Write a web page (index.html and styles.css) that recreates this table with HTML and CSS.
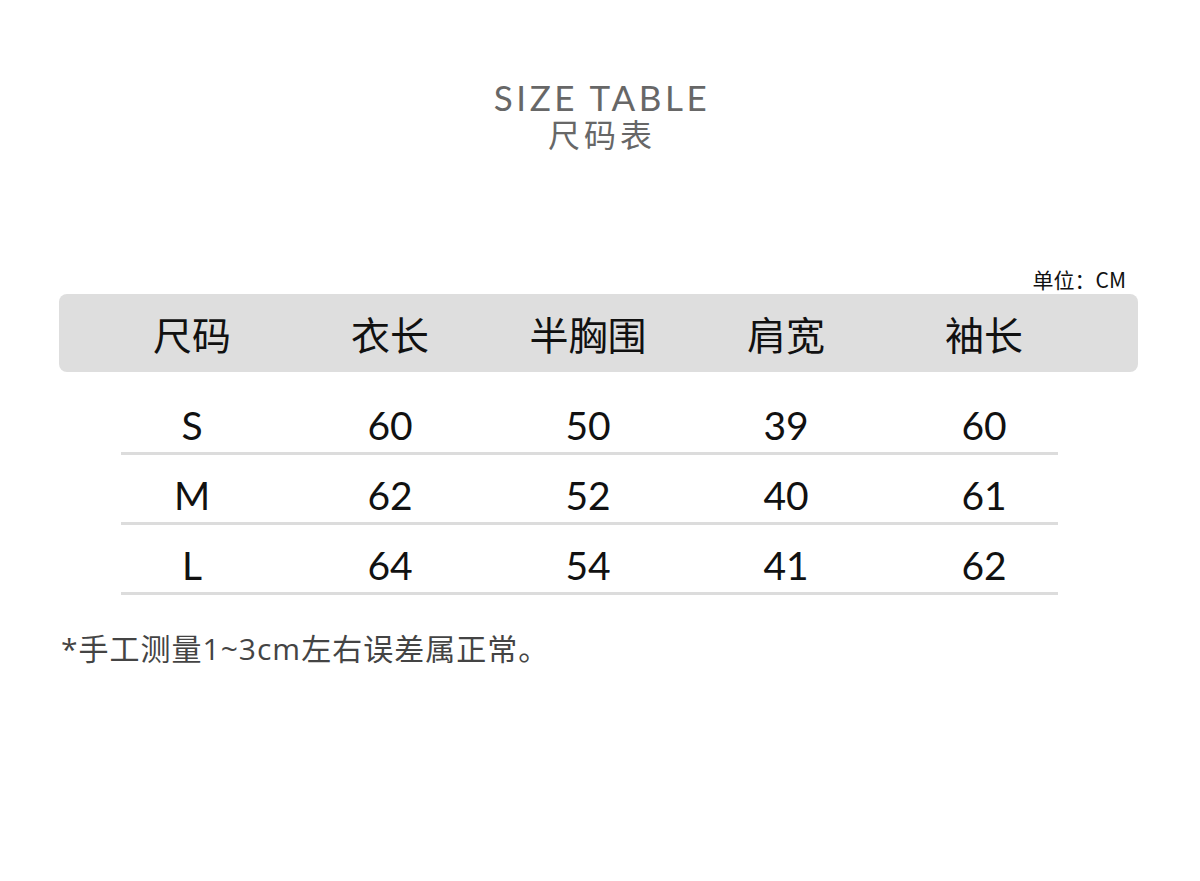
FILE: index.html
```html
<!DOCTYPE html>
<html lang="zh-CN">
<head>
<meta charset="utf-8">
<title>SIZE TABLE 尺码表</title>
<link rel="stylesheet" href="styles.css">
</head>
<body>
<div class="page">
  <header class="title">
    <div class="title-en">SIZE TABLE</div>
    <div class="title-cn">尺码表</div>
  </header>

  <div class="unit">单位：CM</div>

  <div class="table">
    <div class="thead">
      <div class="cell">尺码</div>
      <div class="cell">衣长</div>
      <div class="cell">半胸围</div>
      <div class="cell">肩宽</div>
      <div class="cell">袖长</div>
    </div>
    <div class="tbody">
      <div class="row">
        <div class="cols">
          <div class="cell">S</div><div class="cell">60</div><div class="cell">50</div><div class="cell">39</div><div class="cell">60</div>
        </div>
      </div>
      <div class="row">
        <div class="cols">
          <div class="cell">M</div><div class="cell">62</div><div class="cell">52</div><div class="cell">40</div><div class="cell">61</div>
        </div>
      </div>
      <div class="row">
        <div class="cols">
          <div class="cell">L</div><div class="cell">64</div><div class="cell">54</div><div class="cell">41</div><div class="cell">62</div>
        </div>
      </div>
    </div>
  </div>

  <p class="note">*手工测量1~3cm左右误差属正常。</p>
</div>
</body>
</html>
```

FILE: styles.css
```css
html, body {
  margin: 0;
  padding: 0;
  background: #ffffff;
}

.page {
  width: 1200px;
  height: 881px;
  font-family: "Noto Sans CJK SC", "Noto Sans", sans-serif;
  color: #111;
}

.title {
  padding-top: 79px;
  display: flex;
  flex-direction: column;
  align-items: center;
  color: #676767;
}

.title-en {
  font-family: "Lato", "Noto Sans", sans-serif;
  font-size: 35px;
  line-height: 36px;
  letter-spacing: 3.6px;
  padding-left: 4px;
}

.title-cn {
  font-family: "Noto Sans CJK SC", sans-serif;
  font-size: 32px;
  line-height: 36px;
  letter-spacing: 4px;
  padding-left: 4px;
}

.unit {
  margin-top: 116px;
  padding-right: 74px;
  text-align: right;
  font-size: 21px;
  line-height: 24px;
  color: #111;
}

.table {
  margin-top: 3px;
  margin-left: 59px;
  width: 1079px;
}

.thead {
  height: 78px;
  background: #dedede;
  border-radius: 8px;
  display: grid;
  grid-template-columns: repeat(5, 198px);
  padding-left: 34px;
  align-items: center;
  font-size: 39px;
  color: #111;
}

.cell {
  text-align: center;
}

.thead .cell {
  line-height: 78px;
}

.tbody {
  margin-left: 62px;
  width: 937px;
  padding-top: 13px;
}

.row {
  height: 67px;
  border-bottom: 3px solid #dcdcdc;
  display: flex;
  align-items: center;
}

.cols {
  margin-left: -28px;
  display: grid;
  grid-template-columns: repeat(5, 198px);
  font-family: "Lato", "Noto Sans", sans-serif;
  font-size: 39px;
  line-height: 40px;
  padding-top: 12px;
  color: #111;
}

.note {
  margin: 36px 0 0 61px;
  font-family: "Open Sans", "Noto Sans CJK SC", sans-serif;
  font-size: 30px;
  line-height: 36px;
  letter-spacing: 1px;
  color: #444;
}
```
